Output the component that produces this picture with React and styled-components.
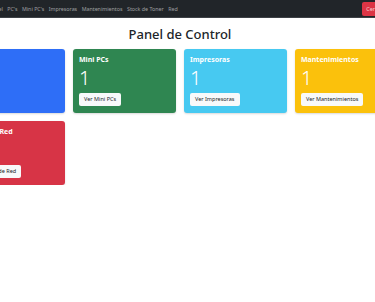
import React from 'react';
import styled, { createGlobalStyle } from 'styled-components';

const GlobalStyle = createGlobalStyle`
	html, body {
		margin: 0;
		padding: 0;
		background: #ffffff;
		overflow: hidden;
		font-family: 'Noto Sans', 'Open Sans', sans-serif;
	}
`;

const Navbar = styled.nav`
	height: 17px;
	background-color: #212529;
	border-bottom: 1px solid #3d4146;
	display: flex;
	align-items: center;
	justify-content: space-between;
	overflow: hidden;
`;

const NavLinks = styled.div`
	display: flex;
	align-items: center;
	gap: 4.5px;
	margin-left: -11px;
`;

const NavLink = styled.a`
	font-size: 5.3px;
	color: rgba(255, 255, 255, 0.55);
	text-decoration: none;
	white-space: nowrap;
`;

const LogoutButton = styled.button`
	height: 14px;
	margin-right: -30px;
	padding: 0 4px;
	border: none;
	border-radius: 2px;
	background-color: #dc3545;
	color: rgba(255, 255, 255, 0.75);
	font-family: inherit;
	font-size: 5.5px;
	white-space: nowrap;
`;

const Main = styled.main`
	width: 450px;
	margin-left: -45px;
	display: flex;
	flex-direction: column;
	align-items: center;
`;

const Title = styled.h1`
	margin: 9px 0 8px;
	font-size: 13px;
	font-weight: 500;
	color: #212529;
	line-height: 14px;
`;

const Grid = styled.div`
	display: grid;
	grid-template-columns: repeat(4, 103px);
	gap: 8px;
`;

const Card = styled.div`
	height: 64px;
	box-sizing: border-box;
	padding: 6px 6px;
	border-radius: 3px;
	background-color: ${(props) => props.color};
	color: #ffffff;
	display: flex;
	flex-direction: column;
	align-items: flex-start;
	box-shadow: 0 1px 2px rgba(0, 0, 0, 0.15);
`;

const CardTitle = styled.div`
	font-size: 7px;
	font-weight: 700;
	line-height: 8px;
	margin-top: 1px;
`;

const CardCount = styled.div`
	font-size: 20px;
	font-weight: 300;
	line-height: 22px;
	margin-top: 3px;
`;

const CardButton = styled.button`
	margin-top: 4px;
	height: 13px;
	padding: 0 5px;
	border: none;
	border-radius: 2px;
	background-color: #f8f9fa;
	color: #212529;
	font-family: inherit;
	font-size: 5.5px;
	line-height: 13px;
	white-space: nowrap;
`;

const links = ['Panel', "PC's", "Mini PC's", 'Impresoras', 'Mantenimientos', 'Stock de Toner', 'Red'];

const cards = [
	{ title: 'PCs', count: 1, button: 'Ver PCs', color: '#2e6ef7' },
	{ title: 'Mini PCs', count: 1, button: 'Ver Mini PCs', color: '#2f8651' },
	{ title: 'Impresoras', count: 1, button: 'Ver Impresoras', color: '#47c9f1' },
	{ title: 'Mantenimientos', count: 1, button: 'Ver Mantenimientos', color: '#fbc10c' },
	{ title: 'Stock de Red', count: 1, button: 'Ver Stock de Red', color: '#d73446' }
];

export default function App() {
	return (
		<>
			<GlobalStyle />
			<Navbar>
				<NavLinks>
					{links.map((l) => (
						<NavLink key={l} href="#">
							{l}
						</NavLink>
					))}
				</NavLinks>
				<LogoutButton>Cerrar Sesión</LogoutButton>
			</Navbar>
			<Main>
				<Title>Panel de Control</Title>
				<Grid>
					{cards.map((c) => (
						<Card key={c.title} color={c.color}>
							<CardTitle>{c.title}</CardTitle>
							<CardCount>{c.count}</CardCount>
							<CardButton>{c.button}</CardButton>
						</Card>
					))}
				</Grid>
			</Main>
		</>
	);
}
